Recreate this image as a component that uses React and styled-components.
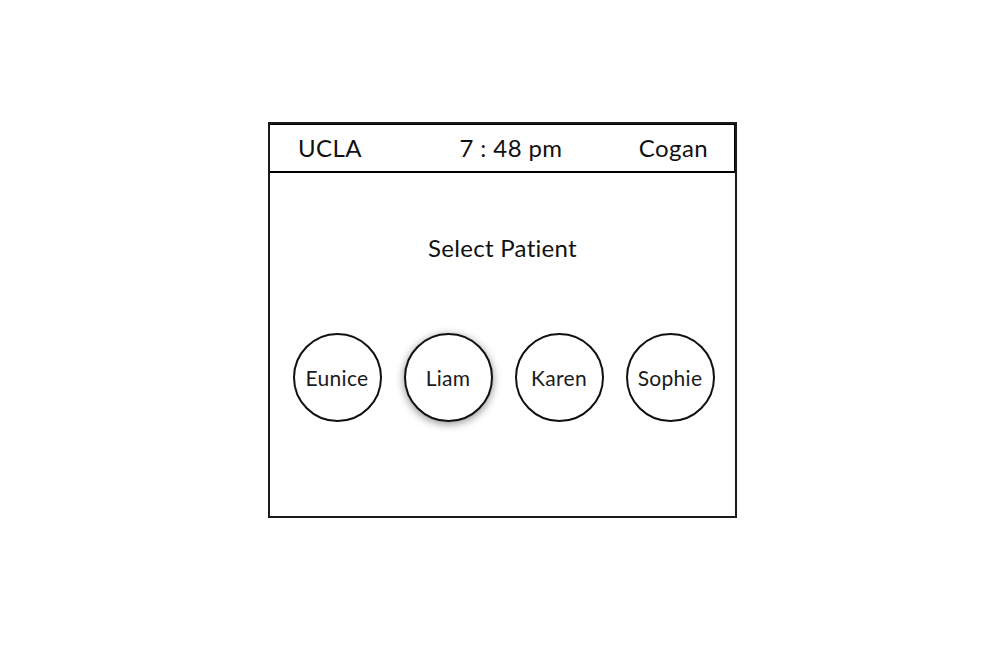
import React from "react";
import styled, { createGlobalStyle } from "styled-components";

const GlobalStyle = createGlobalStyle`
  html, body {
    margin: 0;
    padding: 0;
    background: #ffffff;
  }
  body {
    font-family: Lato, "Noto Sans", sans-serif;
    color: #111;
  }
`;

const Page = styled.div`
  width: 1000px;
  height: 667px;
  box-sizing: border-box;
  padding: 122px 0 0 268px;
`;

const Frame = styled.div`
  width: 469px;
  height: 396px;
  box-sizing: border-box;
  border: 2px solid #1a1a1a;
  display: flex;
  flex-direction: column;
`;

const Header = styled.header`
  height: 49px;
  box-sizing: border-box;
  border-top: 1px solid #000;
  border-right: 1px solid #000;
  border-bottom: 2px solid #000;
  display: grid;
  grid-template-columns: 1fr auto 1fr;
  align-items: center;
  padding: 0 26px 0 28px;
  font-size: 24px;
  font-weight: 400;
  letter-spacing: 0.4px;
`;

const HeaderItem = styled.span`
  justify-self: ${(p) => p.$align || "start"};
  padding-left: ${(p) => (p.$shift ? "16px" : "0")};
  padding-bottom: 2px;
`;

const Body = styled.main`
  flex: 1;
  display: flex;
  flex-direction: column;
  align-items: center;
`;

const Title = styled.h2`
  margin: 60px 0 0 0;
  font-size: 24px;
  font-weight: 400;
  letter-spacing: 0.3px;
`;

const PatientRow = styled.div`
  display: flex;
  gap: 22px;
  margin-top: 71px;
  padding-left: 2px;
`;

const Patient = styled.button`
  width: 89px;
  height: 89px;
  box-sizing: border-box;
  border-radius: 50%;
  border: 2px solid #111;
  background: #fff;
  font-family: Lato, "Noto Sans", sans-serif;
  font-size: 21px;
  font-weight: 400;
  letter-spacing: 0.3px;
  color: #1a1a1a;
  padding: 0;
  display: flex;
  align-items: center;
  justify-content: center;
  box-shadow: ${(p) => (p.$active ? "0 2px 9px rgba(0,0,0,0.45)" : "none")};
  cursor: pointer;
`;

const patients = ["Eunice", "Liam", "Karen", "Sophie"];

export default function App() {
  return (
    <>
      <GlobalStyle />
      <Page>
        <Frame>
          <Header>
            <HeaderItem>UCLA</HeaderItem>
            <HeaderItem $align="center" $shift>7 : 48 pm</HeaderItem>
            <HeaderItem $align="end">Cogan</HeaderItem>
          </Header>
          <Body>
            <Title>Select Patient</Title>
            <PatientRow>
              {patients.map((name) => (
                <Patient key={name} $active={name === "Liam"}>
                  {name}
                </Patient>
              ))}
            </PatientRow>
          </Body>
        </Frame>
      </Page>
    </>
  );
}
